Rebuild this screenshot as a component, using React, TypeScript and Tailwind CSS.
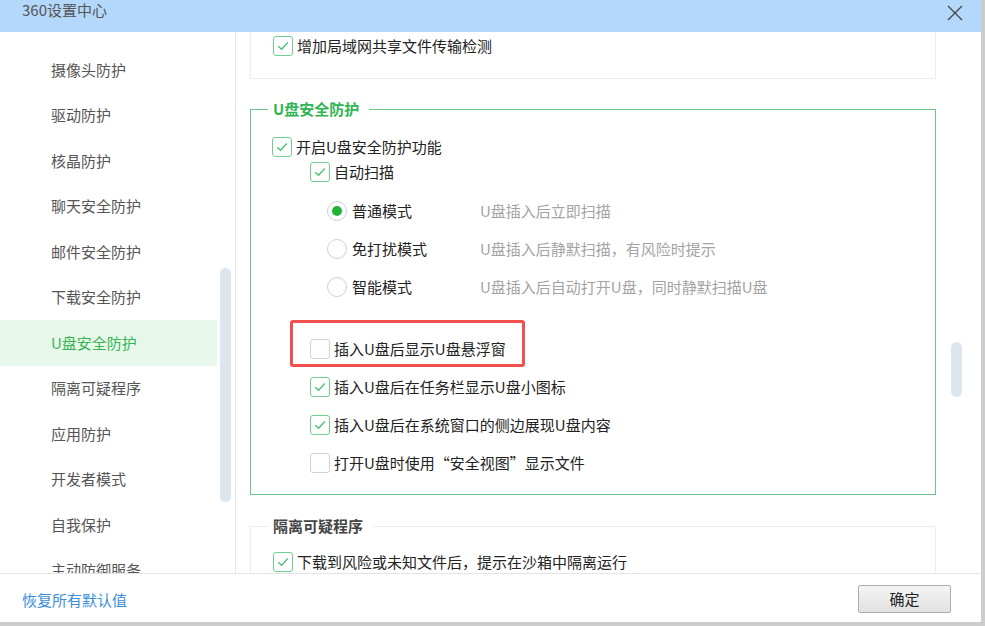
import { FC } from "react";

const font = { fontFamily: '"Noto Sans CJK SC", "Noto Sans", sans-serif' };

const sideItems = [
  "局域网共享防护",
  "摄像头防护",
  "驱动防护",
  "核晶防护",
  "聊天安全防护",
  "邮件安全防护",
  "下载安全防护",
  "U盘安全防护",
  "隔离可疑程序",
  "应用防护",
  "开发者模式",
  "自我保护",
  "主动防御服务",
];

// checkbox square, green when ticked
const Check: FC<{ on?: boolean }> = ({ on }) => (
  <span
    className={`w-[20px] h-[20px] shrink-0 rounded-[3px] border-[1.5px] bg-white flex items-center justify-center ${
      on ? "border-[#6fd092]" : "border-[#d2d2d2]"
    }`}
  >
    {on && (
      <svg width="12" height="10" viewBox="0 0 12 10">
        <path d="M1.2 5.2 L4.6 8.2 L10.8 1.6" fill="none" stroke="#4cc172" strokeWidth="1.4" />
      </svg>
    )}
  </span>
);

const Radio: FC<{ on?: boolean }> = ({ on }) => (
  <span className="w-[20px] h-[20px] shrink-0 rounded-full border-[1.5px] border-[#cfcfcf] bg-white flex items-center justify-center">
    {on && <span className="w-[10px] h-[10px] rounded-full bg-[#22b438]" />}
  </span>
);

const CheckRow: FC<{ on?: boolean; text: string; className?: string }> = ({ on, text, className = "" }) => (
  <div className={`flex items-center h-5 gap-[4px] ${className}`}>
    <Check on={on} />
    <span className="text-[15px] text-[#222] leading-5">{text}</span>
  </div>
);

const RadioRow: FC<{ on?: boolean; label: string; desc: string; className?: string }> = ({
  on,
  label,
  desc,
  className = "",
}) => (
  <div className={`flex items-center h-5 ml-[55px] ${className}`}>
    <Radio on={on} />
    <span className="ml-[5px] w-[128px] text-[15px] text-[#222] leading-5">{label}</span>
    <span className="text-[15px] text-[#a3a3a3] leading-5">{desc}</span>
  </div>
);

const App: FC = () => {
  return (
    <div className="w-[985px] h-[626px] bg-[#cdcdcd] overflow-hidden" style={font}>
      <div className="w-[981px] h-[622px] bg-white flex flex-col">
        {/* title bar */}
        <div className="h-[32px] shrink-0 bg-[#b3d8fb] flex items-start justify-between pl-[22px] pr-[18px]">
          <span className="text-[15px] text-[#555] leading-5 mt-[0px]">360设置中心</span>
          <svg width="16" height="16" viewBox="0 0 16 16" className="mt-[5px]">
            <path d="M1 1 L15 15 M15 1 L1 15" stroke="#444" strokeWidth="1.3" />
          </svg>
        </div>

        {/* body */}
        <div className="flex h-[541px] shrink-0">
          {/* sidebar */}
          <div className="relative w-[236px] shrink-0 border-r border-[#e6e6e6] overflow-hidden">
            <div className="-mt-[30.5px]">
              {sideItems.map((s) => (
                <div
                  key={s}
                  className={`w-[217px] h-[45.5px] flex items-center pl-[51px] text-[15px] ${
                    s === "U盘安全防护" ? "bg-[#e7f8eb] text-[#36b451]" : "text-[#555]"
                  }`}
                >
                  {s}
                </div>
              ))}
            </div>
            <div className="absolute left-[220px] top-[236px] w-[11px] h-[234px] rounded-full bg-[#dce6ef]" />
          </div>

          {/* content */}
          <div className="relative flex-1 overflow-hidden pl-[14px]">
            <div className="w-[686px]">
              <div className="-mt-[40px] h-[87px] border border-[#ececec] flex flex-col justify-end pb-[22px] pl-[22px]">
                <CheckRow on text="增加局域网共享文件传输检测" />
              </div>

              {/* U盘安全防护 */}
              <div className="relative mt-[30px] border border-[#6cc78c] pl-[21px] pt-[27px] pb-[21px]">
                <span className="absolute -top-[11px] left-[17px] bg-white pl-[5px] pr-[10px] text-[15px] font-bold text-[#2fb451] leading-5">
                  U盘安全防护
                </span>
                <CheckRow on text="开启U盘安全防护功能" />
                <CheckRow on text="自动扫描" className="ml-[38px] mt-[5px]" />
                <RadioRow on label="普通模式" desc="U盘插入后立即扫描" className="mt-[19px]" />
                <RadioRow label="免打扰模式" desc="U盘插入后静默扫描，有风险时提示" className="mt-[18px]" />
                <RadioRow label="智能模式" desc="U盘插入后自动打开U盘，同时静默扫描U盘" className="mt-[18px]" />
                <div className="relative ml-[38px] mt-[42px]">
                  <div className="absolute -left-[20px] -top-[19px] w-[235px] h-[47px] border-[3px] border-[#f1504f] rounded-[3px]" />
                  <CheckRow text="插入U盘后显示U盘悬浮窗" />
                </div>
                <CheckRow on text="插入U盘后在任务栏显示U盘小图标" className="ml-[38px] mt-[18px]" />
                <CheckRow on text="插入U盘后在系统窗口的侧边展现U盘内容" className="ml-[38px] mt-[18px]" />
                <CheckRow text="打开U盘时使用“安全视图”显示文件" className="ml-[38px] mt-[18px]" />
              </div>

              {/* 隔离可疑程序 */}
              <div className="relative mt-[31px] border border-[#ececec] pl-[22px] pt-[25px] pb-[20px]">
                <span className="absolute -top-[11px] left-[17px] bg-white pl-[5px] pr-[10px] text-[15px] font-bold text-[#444] leading-5">
                  隔离可疑程序
                </span>
                <CheckRow on text="下载到风险或未知文件后，提示在沙箱中隔离运行" />
              </div>
            </div>
            <div className="absolute left-[715px] top-[310px] w-[11px] h-[55px] rounded-full bg-[#dce6ef]" />
          </div>
        </div>

        {/* footer */}
        <div className="flex-1 border-t border-[#e4e4e4] flex items-center justify-between pl-[22px] pr-[30px]">
          <span className="text-[15px] text-[#3a8ddb] mt-[4px] cursor-pointer">恢复所有默认值</span>
          <button className="w-[93px] h-[28px] mt-[2px] rounded-[2px] border border-[#adadad] bg-gradient-to-b from-[#f4f4f4] to-[#e2e2e2] text-[15px] text-[#222]">
            确定
          </button>
        </div>
      </div>
    </div>
  );
};

export default App;
